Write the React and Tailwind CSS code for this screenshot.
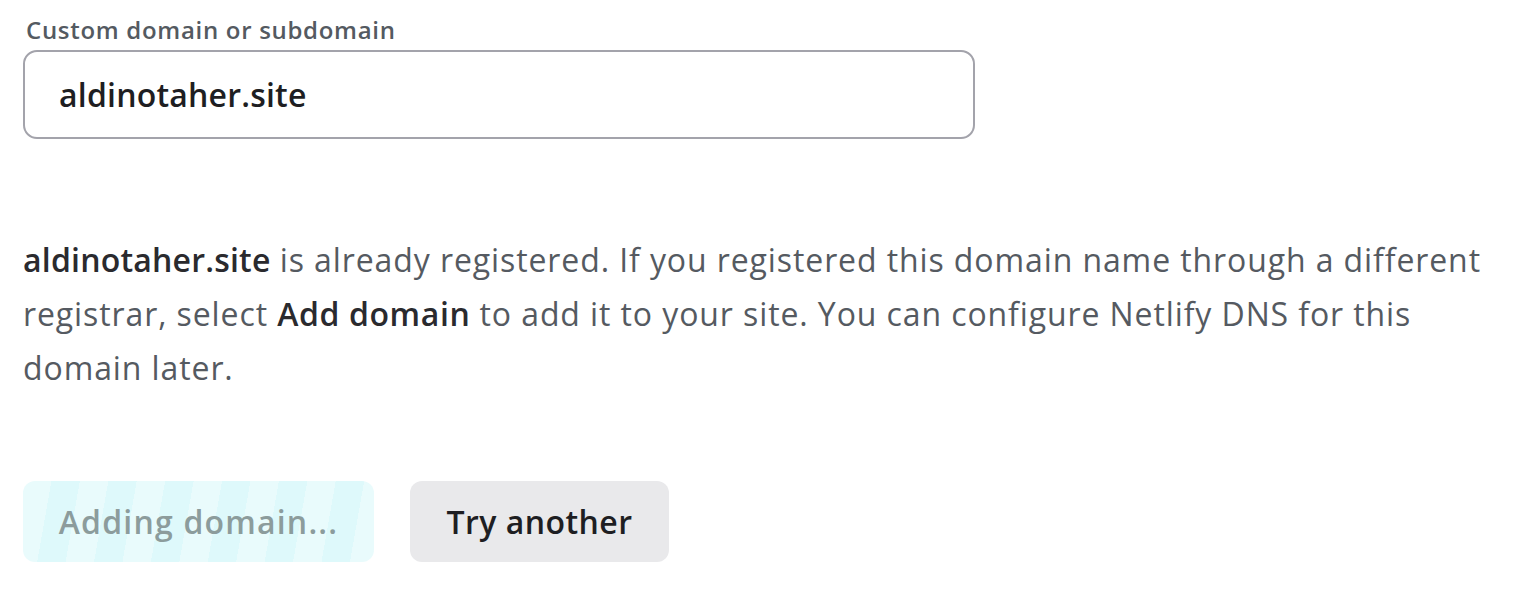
import React from 'react';

export default function App() {
  return (
    <div className="min-h-[590px] w-[1525px] bg-white font-['Open_Sans',sans-serif] text-[#333]">
      <div className="pl-[23px] pt-[14px]">
        <label className="block pl-[3px] text-[24px] leading-[32px] font-semibold tracking-[0.7px] text-[#545a61]">
          Custom domain or subdomain
        </label>
        <div className="mt-[4px] flex h-[89px] w-[952px] items-center rounded-[14px] border-2 border-[#a3a3ab] pl-[34px]">
          <span className="text-[32px] font-semibold tracking-[0.2px] text-[#1e1e22]">aldinotaher.site</span>
        </div>

        <p className="mt-[94px] w-[1480px] text-[32px] leading-[54px] tracking-[0.9px] text-[#555a61]">
          <strong className="font-semibold tracking-[0.2px] text-[#2a2a2e]">aldinotaher.site</strong> is already
          registered. If you registered this domain name through a different registrar, select{' '}
          <strong className="font-semibold tracking-[0.6px] text-[#2a2a2e]">Add domain</strong> to add it to your
          site. You can configure Netlify DNS for this domain later.
        </p>

        <div className="mt-[86px] flex gap-[36px]">
          <button
            disabled
            className="h-[81px] w-[351px] rounded-[12px] bg-[repeating-linear-gradient(100deg,#e9fbfc_0px,#e9fbfc_28px,#def9fb_28px,#def9fb_56px)] text-[32px] font-semibold tracking-[1.2px] text-[#8c9c9c]"
          >
            Adding domain...
          </button>
          <button className="h-[81px] w-[259px] rounded-[12px] bg-[#e9e9eb] text-[32px] font-semibold tracking-[0.45px] text-[#1e1e22]">
            Try another
          </button>
        </div>
      </div>
    </div>
  );
}
